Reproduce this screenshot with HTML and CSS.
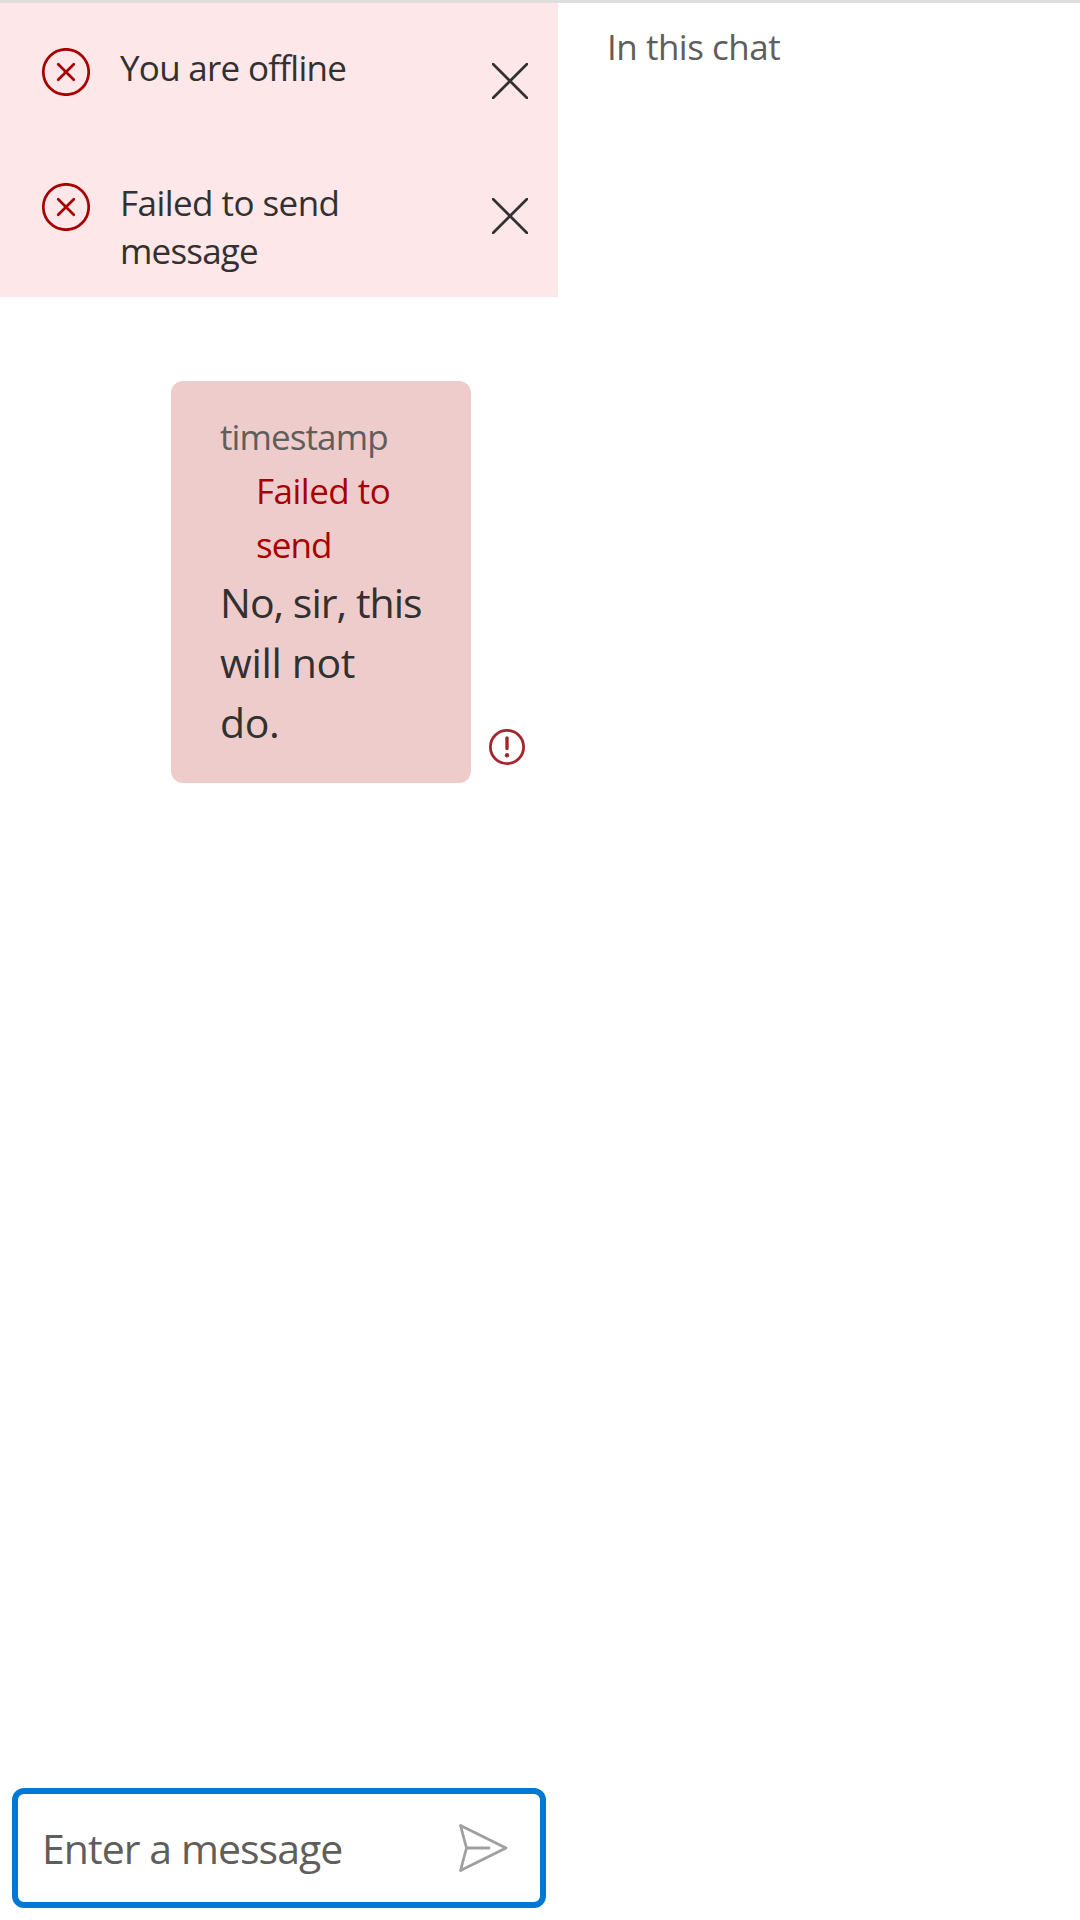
FILE: index.html
```html
<!DOCTYPE html>
<html lang="en">
<head>
<meta charset="utf-8">
<title>Chat</title>
<link rel="stylesheet" href="styles.css">
</head>
<body>
<div class="app">
  <main class="chat">
    <section class="alerts">
      <div class="alert">
        <svg class="alert-icon" viewBox="0 0 48 48"><circle cx="24" cy="24" r="22.7"/><path d="M16.2 16.2l15.6 15.6M31.8 16.2L16.2 31.8"/></svg>
        <p class="alert-text"><span class="offline">You are offline</span></p>
        <svg class="dismiss" viewBox="0 0 36 36"><path d="M1 1l34 34M35 1L1 35"/></svg>
      </div>
      <div class="alert">
        <svg class="alert-icon" viewBox="0 0 48 48"><circle cx="24" cy="24" r="22.7"/><path d="M16.2 16.2l15.6 15.6M31.8 16.2L16.2 31.8"/></svg>
        <p class="alert-text"><span class="failed-title">Failed to send</span><br><span class="failed-rest">message</span></p>
        <svg class="dismiss" viewBox="0 0 36 36"><path d="M1 1l34 34M35 1L1 35"/></svg>
      </div>
    </section>
    <section class="thread">
      <div class="bubble">
        <div class="timestamp">timestamp</div>
        <div class="status">Failed to<br><span class="status-end">send</span></div>
        <div class="body"><span class="body-first">No, sir, this</span><br>will not<br>do.</div>
      </div>
      <svg class="failed-icon" viewBox="0 0 36 36"><circle class="ring" cx="18" cy="18" r="16.6"/><path class="ring bar" d="M18 9v10.5"/><circle class="dot" cx="18" cy="26.3" r="2.2"/></svg>
    </section>
    <div class="composer">
      <span class="placeholder">Enter a message</span>
      <svg class="send" viewBox="0 0 49 48"><path d="M1.5 1.5L47 24 1.5 46.5 7.5 24zM7.5 24H30"/></svg>
    </div>
  </main>
  <aside class="people">In this chat</aside>
</div>
</body>
</html>
```
FILE: styles.css
```css
* { box-sizing: border-box; }
body { margin: 0; background: #fff; color: #323130; font-family: "Open Sans", "Noto Sans", sans-serif; font-size: 35px; }
p { margin: 0; }
svg { display: block; flex: none; fill: none; stroke-linecap: round; stroke-linejoin: round; }
.app { display: flex; height: 1920px; border-top: 3px solid #dfdddd; white-space: nowrap; }
.chat { width: 558px; display: flex; flex-direction: column; }
.alerts { height: 294px; background: #fde7e9; }
.alert { height: 135px; display: flex; align-items: flex-start; padding: 41px 30px 0 42px; }
.alert-icon { width: 48px; height: 48px; margin-top: 4px; stroke: #a80000; stroke-width: 2.7; }
.alert-text { flex: 1; margin-left: 30px; line-height: 48px; }
.offline { letter-spacing: -0.72px; }
.failed-title { letter-spacing: -0.55px; }
.failed-rest { letter-spacing: -0.8px; }
.dismiss { width: 36px; height: 36px; margin-top: 19px; stroke: #323130; stroke-width: 2.7; }
.thread { flex: 1; display: flex; align-items: flex-start; padding: 84px 0 0 171px; }
.bubble { width: 300px; height: 402px; padding: 29px 0 0 49px; border-radius: 12px; background: #eecccc; }
.timestamp, .status { line-height: 54px; }
.timestamp { color: #605e5c; letter-spacing: -0.9px; }
.status { margin-left: 36px; color: #a80000; letter-spacing: -0.5px; }
.status-end { letter-spacing: -0.95px; }
.body { font-size: 41px; line-height: 60px; letter-spacing: -0.35px; }
.body-first { letter-spacing: -0.98px; }
.failed-icon { width: 36px; height: 36px; margin: 348px 0 0 18px; stroke: #a4262c; }
.ring { stroke-width: 2.8; }
.bar { stroke-width: 3.4; }
.dot { fill: #a4262c; stroke: none; }
.composer { height: 120px; margin: 0 12px 12px; display: flex; align-items: center; justify-content: space-between; padding: 0 32px 0 24px; border: 6px solid #0078d4; border-radius: 12px; font-size: 41px; line-height: 60px; color: #605e5c; }
.placeholder { letter-spacing: -0.94px; }
.send { width: 49px; height: 48px; stroke: #a19f9d; stroke-width: 2.8; }
.people { padding: 20px 0 0 49px; line-height: 48px; color: #605e5c; letter-spacing: -0.48px; }
```
